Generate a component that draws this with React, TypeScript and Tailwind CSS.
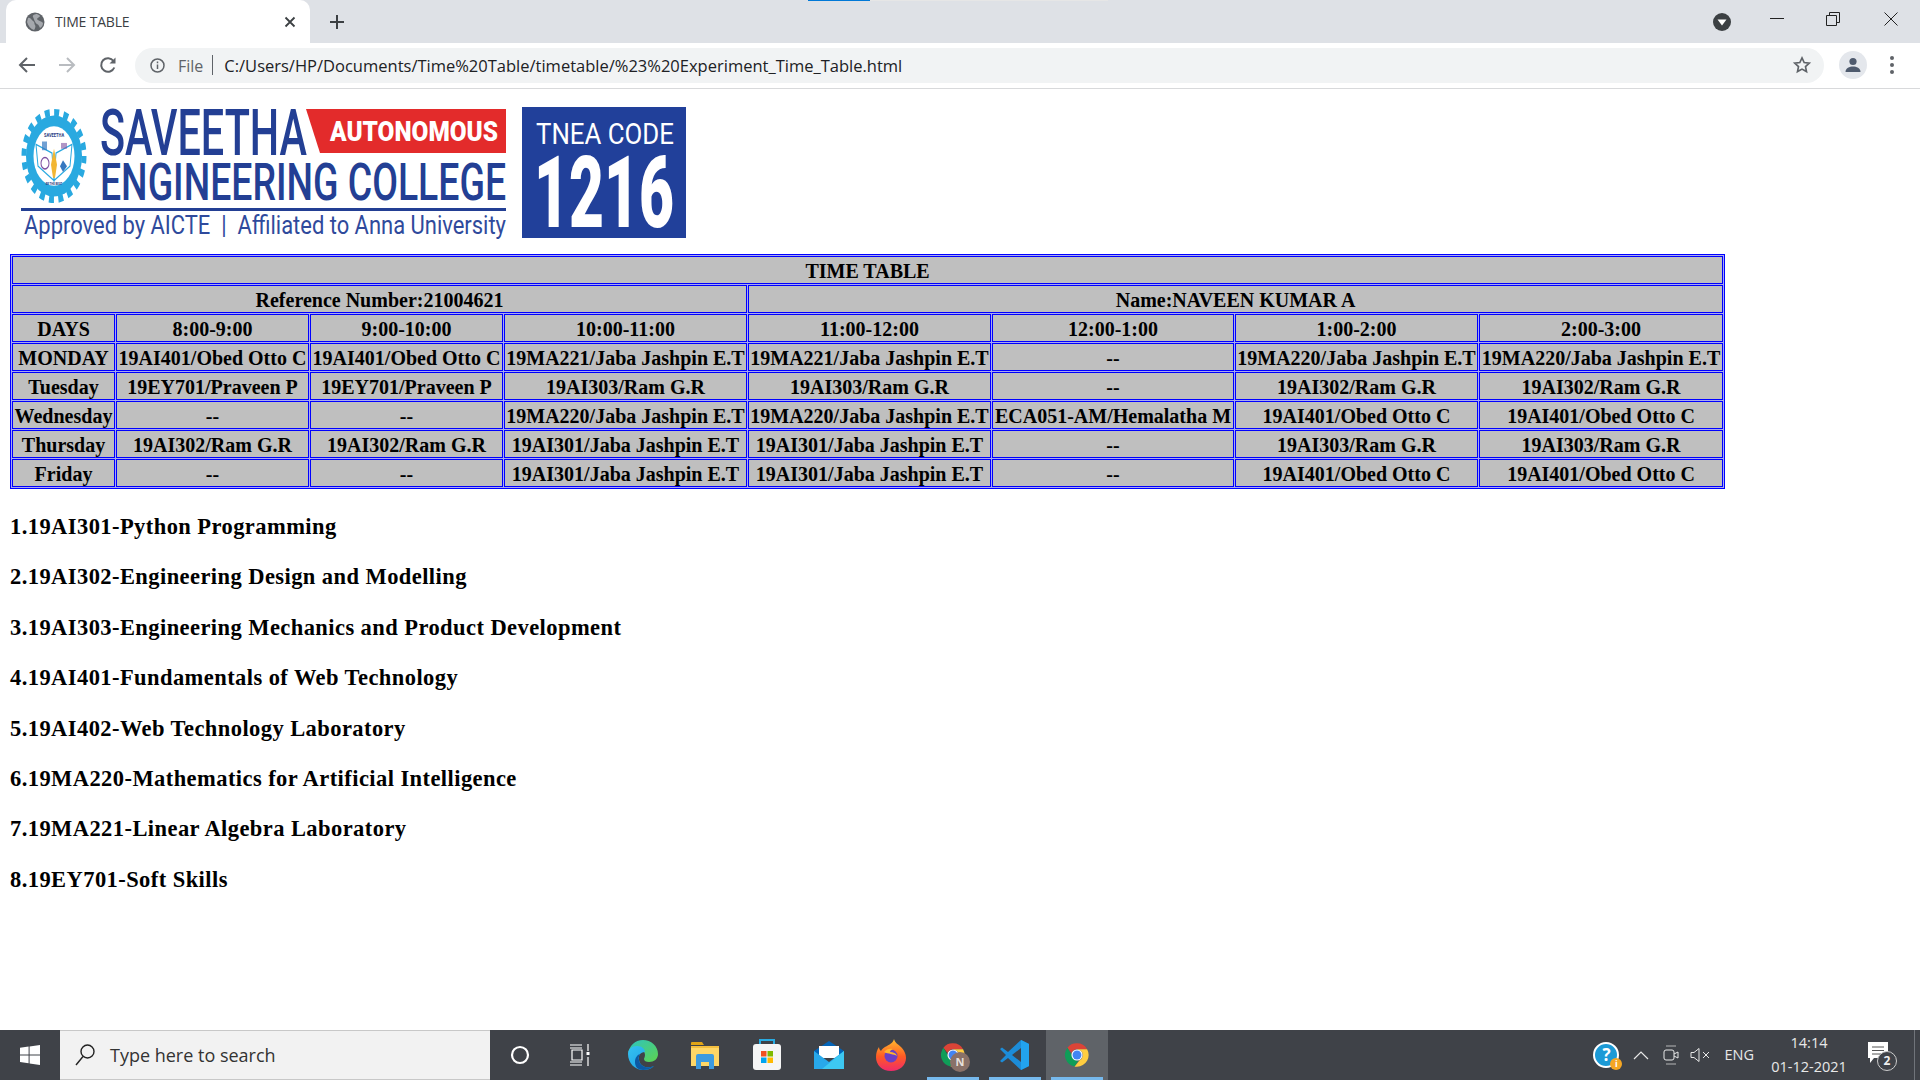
import React from "react";

const serif = "font-['Liberation_Serif',serif]";
const ui = "font-['Open_Sans',sans-serif]";

const widths = [103, 193, 193, 243, 243, 242, 243, 244];
const rows: string[][] = [
  ["DAYS", "8:00-9:00", "9:00-10:00", "10:00-11:00", "11:00-12:00", "12:00-1:00", "1:00-2:00", "2:00-3:00"],
  ["MONDAY", "19AI401/Obed Otto C", "19AI401/Obed Otto C", "19MA221/Jaba Jashpin E.T", "19MA221/Jaba Jashpin E.T", "--", "19MA220/Jaba Jashpin E.T", "19MA220/Jaba Jashpin E.T"],
  ["Tuesday", "19EY701/Praveen P", "19EY701/Praveen P", "19AI303/Ram G.R", "19AI303/Ram G.R", "--", "19AI302/Ram G.R", "19AI302/Ram G.R"],
  ["Wednesday", "--", "--", "19MA220/Jaba Jashpin E.T", "19MA220/Jaba Jashpin E.T", "ECA051-AM/Hemalatha M", "19AI401/Obed Otto C", "19AI401/Obed Otto C"],
  ["Thursday", "19AI302/Ram G.R", "19AI302/Ram G.R", "19AI301/Jaba Jashpin E.T", "19AI301/Jaba Jashpin E.T", "--", "19AI303/Ram G.R", "19AI303/Ram G.R"],
  ["Friday", "--", "--", "19AI301/Jaba Jashpin E.T", "19AI301/Jaba Jashpin E.T", "--", "19AI401/Obed Otto C", "19AI401/Obed Otto C"],
];
const subjects = [
  "1.19AI301-Python Programming",
  "2.19AI302-Engineering Design and Modelling",
  "3.19AI303-Engineering Mechanics and Product Development",
  "4.19AI401-Fundamentals of Web Technology",
  "5.19AI402-Web Technology Laboratory",
  "6.19MA220-Mathematics for Artificial Intelligence",
  "7.19MA221-Linear Algebra Laboratory",
  "8.19EY701-Soft Skills",
];

const cell = "h-[28px] border border-[#0000ff] bg-[#bfbfbf] p-0 pt-[1px] text-center align-middle whitespace-nowrap overflow-hidden font-bold";

function Logo() {
  const blue = "#233f94";
  const f = "Roboto, sans-serif";
  return (
    <svg className="block" width="680" height="145" viewBox="10 100 680 145">
      <g transform="translate(54 156) scale(1 1.45)">
        <circle r="28" fill="#29a9e0" />
        <circle r="30" fill="none" stroke="#29a9e0" strokeWidth="5" strokeDasharray="5 4.42" />
        <circle r="20.5" fill="#fff" />
        <path d="M-18 -8 L-2 -2 L0 17 L-16 7Z M18 -8 L2 -2 L0 17 L16 7Z" fill="#fff" stroke="#29a9e0" strokeWidth="1" />
        <path d="M0 -5 L3 6 L1 15 L-1 15 L-3 6Z" fill="#f2b632" />
        <circle cx="-9" cy="5" r="4" fill="none" stroke="#7b4fa0" strokeWidth="1" />
        <path d="M9 3 l4 4 l-4 4 l-3 -4Z" fill="#3578c0" />
        <path d="M-12 -10 h5 v6 h-5Z" fill="#3578c0" opacity=".7" />
        <path d="M7 -9 h6 v4 h-6Z" fill="#7b4fa0" opacity=".6" />
        <text x="0" y="-13" textAnchor="middle" fontFamily={f} fontSize="4" fontWeight="700" fill="#29397f">SAVEETHA</text>
        <text x="0" y="20" textAnchor="middle" fontFamily={f} fontSize="2.8" fontWeight="700" fill="#29397f">BE THE BEST</text>
      </g>
      <text x="100" y="155" fontFamily={f} fontSize="64" fontWeight="500" fill={blue} textLength="207" lengthAdjust="spacingAndGlyphs">SAVEETHA</text>
      <path d="M306 109 H506 V153 H320Z" fill="#e32b2b" />
      <text x="330" y="141" fontFamily={f} fontSize="28" fontWeight="900" fill="#fff" textLength="168" lengthAdjust="spacingAndGlyphs">AUTONOMOUS</text>
      <text x="100" y="200" fontFamily={f} fontSize="52" fontWeight="500" fill={blue} textLength="406" lengthAdjust="spacingAndGlyphs">ENGINEERING COLLEGE</text>
      <rect x="21" y="208" width="485" height="3" fill={blue} />
      <text x="24" y="234" fontFamily={f} fontSize="25" fill="#2f4a9c" textLength="482" lengthAdjust="spacingAndGlyphs">{"Approved by AICTE \u00a0|\u00a0 Affiliated to Anna University"}</text>
      <rect x="522" y="107" width="164" height="131" fill="#21409a" />
      <text x="536" y="144" fontFamily={f} fontSize="30" fill="#fff" textLength="138" lengthAdjust="spacingAndGlyphs">TNEA CODE</text>
      <text x="534" y="227" fontFamily={f} fontSize="100" fontWeight="900" fill="#fff" textLength="140" lengthAdjust="spacingAndGlyphs">1216</text>
    </svg>
  );
}

function ChromeLogo({ size = 26 }: { size?: number }) {
  return (
    <svg width={size} height={size} viewBox="0 0 48 48">
      <path d="M24 4a20 20 0 0 1 17.3 10H24a10 10 0 0 0-9.4 6.6L7.6 11.5A20 20 0 0 1 24 4Z" fill="#db4437" />
      <path d="M7.6 11.5l8.7 15A10 10 0 0 0 26 34l-6.3 9.6A20 20 0 0 1 7.6 11.5Z" fill="#0f9d58" />
      <path d="M41.3 14A20 20 0 0 1 24 44h-4.3L28.5 33A10 10 0 0 0 31 17l-7-3Z" fill="#ffcd40" />
      <circle cx="24" cy="24" r="9.5" fill="#fff" />
      <circle cx="24" cy="24" r="7.6" fill="#4285f4" />
    </svg>
  );
}

function TabBar() {
  return (
    <div className="relative flex h-[43px] items-end bg-[#dee1e6]">
      <div className="absolute left-[808px] top-0 h-px w-[62px] bg-[#0078d7]" />
      <div className="absolute left-[870px] top-0 h-px w-[238px] bg-[#e6e6e6]" />
      <div className="ml-[6px] flex h-[43px] w-[304px] items-center rounded-t-[10px] bg-white pl-[19px]">
        <svg width="20" height="20" viewBox="0 0 20 20" className="shrink-0">
          <circle cx="10" cy="10" r="9.5" fill="#5f6368" />
          <path d="M3 6c3-1 3 2 5 3s1 3 2 4 0 4-1 5c-3-1-6-4-7-8zM12 2c1 1 3 1 3 2s-3 2-3 3 3 2 5 3l1 1c0 2-1 4-3 5-1-2-1-3-3-4S9 7 8 5s2-3 4-3Z" fill="#dee1e6" opacity=".55" />
        </svg>
        <span className={`${ui} ml-[10px] w-[224px] text-[14px] tracking-[-0.2px] whitespace-nowrap text-[#3c4043]`}>TIME TABLE</span>
        <svg width="12" height="12" viewBox="0 0 12 12" className="ml-[5px]" stroke="#3c4043" strokeWidth="1.8">
          <path d="M1.5 1.5l9 9M10.5 1.5l-9 9" />
        </svg>
      </div>
      <svg width="16" height="16" viewBox="0 0 16 16" className="mb-[13px] ml-[19px]" stroke="#3c4043" strokeWidth="2">
        <path d="M8 1v14M1 8h14" />
      </svg>
      <div className="ml-auto flex h-full items-center pr-[22px]">
        <svg width="18" height="18" viewBox="0 0 18 18" className="mr-[39px] mt-[1px]">
          <circle cx="9" cy="9" r="9" fill="#3c4043" />
          <path d="M4.5 6.5h9L9 12.5Z" fill="#fff" />
        </svg>
        <svg width="14" height="14" viewBox="0 0 14 14" className="mr-[42px] mb-[7px]" stroke="#222" strokeWidth="1">
          <path d="M0 7.5h14" />
        </svg>
        <svg width="14" height="14" viewBox="0 0 14 14" className="mr-[44px] mb-[5px]" fill="none" stroke="#222" strokeWidth="1">
          <path d="M.5 3.5h10v10H.5zM3.5 3.5V.5h10v10h-3" />
        </svg>
        <svg width="14" height="14" viewBox="0 0 14 14" className="mb-[5px]" stroke="#222" strokeWidth="1">
          <path d="M.5.5l13 13M13.5.5l-13 13" />
        </svg>
      </div>
    </div>
  );
}

function Toolbar() {
  return (
    <div className="flex h-[46px] items-center border-b border-[#d8d9db] bg-white pb-[1px]">
      <svg width="18" height="18" viewBox="0 0 18 18" className="ml-[18px]" fill="none" stroke="#5f6368" strokeWidth="2">
        <path d="M17 9H2M9 2L2 9l7 7" />
      </svg>
      <svg width="18" height="18" viewBox="0 0 18 18" className="ml-[22px]" fill="none" stroke="#b9bcc0" strokeWidth="2">
        <path d="M1 9h15M9 2l7 7-7 7" />
      </svg>
      <svg width="18" height="18" viewBox="0 0 18 18" className="ml-[23px]" fill="none" stroke="#5f6368" strokeWidth="2">
        <path d="M15.3 11.5A6.8 6.8 0 1 1 14.5 5" />
        <path d="M16.5 1.5v6h-6z" fill="#5f6368" stroke="none" />
      </svg>
      <div className="ml-[18px] flex h-[35px] w-[1689px] items-center rounded-full bg-[#f1f3f4] pl-[15px]">
        <svg width="15" height="15" viewBox="0 0 15 15" className="shrink-0" fill="none" stroke="#5f6368" strokeWidth="1.5">
          <circle cx="7.5" cy="7.5" r="6.5" />
          <path d="M7.5 6.5V11M7.5 3.6v1.6" />
        </svg>
        <span className={`${ui} ml-[13px] mt-[1px] text-[16px] text-[#5f6368]`}>File</span>
        <span className="ml-[9px] h-[20px] w-px bg-[#5f6368]" />
        <span className={`${ui} ml-[11px] mt-[2px] text-[16.500px] whitespace-nowrap text-[#202124]`}>C:/Users/HP/Documents/Time%20Table/timetable/%23%20Experiment_Time_Table.html</span>
        <svg width="20" height="20" viewBox="0 0 24 24" className="ml-auto mr-[12px]" fill="none" stroke="#5f6368" strokeWidth="2">
          <path d="M12 3.5l2.6 5.6 6.1.7-4.5 4.1 1.2 6-5.4-3-5.4 3 1.2-6-4.5-4.1 6.1-.7z" />
        </svg>
      </div>
      <div className="ml-[15px] flex h-[28px] w-[28px] items-center justify-center rounded-full bg-[#e4e7ec]">
        <svg width="18" height="18" viewBox="0 0 18 18" fill="#4f5b6e">
          <circle cx="9" cy="5.5" r="3.6" />
          <path d="M1.5 16c0-4 4-5.5 7.500-5.500s7.500 1.500 7.500 5.500z" />
        </svg>
      </div>
      <div className="ml-[23px] flex flex-col gap-[3px]">
        <span className="h-[4px] w-[4px] rounded-full bg-[#5f6368]" />
        <span className="h-[4px] w-[4px] rounded-full bg-[#5f6368]" />
        <span className="h-[4px] w-[4px] rounded-full bg-[#5f6368]" />
      </div>
    </div>
  );
}

function TimeTable() {
  return (
    <table className={`${serif} w-[1715px] table-fixed border-separate border-spacing-[1px] border border-[#0000ff] bg-[#aaaaee] text-[20px] leading-none text-black`}>
      <colgroup>
        {widths.map((w, i) => (
          <col key={i} style={{ width: w }} />
        ))}
      </colgroup>
      <tbody>
        <tr>
          <td colSpan={8} className={cell}>TIME TABLE</td>
        </tr>
        <tr>
          <td colSpan={4} className={cell}>Reference Number:21004621</td>
          <td colSpan={4} className={cell}>Name:NAVEEN KUMAR A</td>
        </tr>
        {rows.map((r, i) => (
          <tr key={i}>
            {r.map((c, j) => (
              <td key={j} className={cell}>{c}</td>
            ))}
          </tr>
        ))}
      </tbody>
    </table>
  );
}

function TaskIcon({ children, active, lit }: { children: React.ReactNode; active?: boolean; lit?: boolean }) {
  return (
    <div className={`relative flex h-full w-[62px] items-center justify-center ${lit ? "bg-[#5f6368]" : ""}`}>
      {children}
      {active && <span className="absolute bottom-0 left-[5px] right-[5px] h-[3px] bg-[#76b9ed]" />}
    </div>
  );
}

function Taskbar() {
  return (
    <div className="flex h-[50px] items-stretch bg-[#3f4248]">
      <div className="flex w-[60px] items-center justify-center">
        <svg width="20" height="20" viewBox="0 0 20 20" fill="#fff">
          <path d="M0 2.800l8.600-1.200v7.800H0zM9.600 1.400L20 0v9.400H9.600zM0 10.400h8.600v7.900L0 17.100zM9.600 10.400H20V20L9.600 18.500z" />
        </svg>
      </div>
      <div className="flex w-[430px] items-center border-y border-[#c8c8c8] bg-[#f2f2f2] pl-[15px]">
        <svg width="20" height="22" viewBox="0 0 20 22" fill="none" stroke="#222" strokeWidth="1.4">
          <circle cx="12.500" cy="7.500" r="6.500" />
          <path d="M8 12.500L1 21" />
        </svg>
        <span className={`${ui} ml-[15px] text-[18px] text-[#333]`}>Type here to search</span>
      </div>
      <div className="flex w-[60px] items-center justify-center">
        <svg width="20" height="20" viewBox="0 0 20 20" fill="none" stroke="#fff" strokeWidth="2.200"><circle cx="10" cy="10" r="8" /></svg>
      </div>
      <div className="flex w-[60px] items-center justify-center">
        <svg width="22" height="24" viewBox="0 0 22 24" fill="none" stroke="#fff" strokeWidth="1.200">
          <path d="M1 2h12M1 22h12M3 7h10v10H3zM19 1v7M19 14v9M1 5h12M1 19h12" />
          <rect x="17.500" y="9" width="3" height="3" fill="#fff" stroke="none" />
        </svg>
      </div>
      <div className="ml-[2px] flex items-stretch">
        <TaskIcon>
          <svg width="32" height="32" viewBox="0 0 32 32">
            <defs>
              <linearGradient id="e1" x1="0" y1="0" x2="1" y2="1"><stop offset="0" stopColor="#35c1f1" /><stop offset="1" stopColor="#1b9de2" /></linearGradient>
              <linearGradient id="e2" x1="0" y1="0" x2="1" y2="1"><stop offset="0" stopColor="#2dc3c1" /><stop offset="1" stopColor="#5ed44d" /></linearGradient>
            </defs>
            <path d="M16 1C24 1 31 7 31 15c0 5-4 8-9 8-3 0-5-1-5-3 0-1 1-2 1-4 0-4-4-7-8-7-4 0-8 2-9 6C2 7 8 1 16 1Z" fill="url(#e2)" />
            <path d="M1 15c0 9 7 16 15 16 4 0 8-1 11-4-6 3-14 1-15-6-1-4 1-8 6-8 0-3-3-6-8-6-5 0-9 3-9 8Z" fill="url(#e1)" />
            <path d="M12 21c1 7 9 9 15 6-4 3-7 4-11 4-5 0-8-3-8-8 0-4 2-7 5-8-1 2-2 4-1 6Z" fill="#0c59a4" />
          </svg>
        </TaskIcon>
        <TaskIcon>
          <svg width="30" height="28" viewBox="0 0 30 28">
            <path d="M1 2a1 1 0 0 1 1-1h10l2 3h-13z" fill="#e0a416" />
            <path d="M1 5h28v20H1z" fill="#ffd767" />
            <path d="M1 5h28v2H1z" fill="#f4bf3f" />
            <path d="M6 15a2 2 0 0 1 2-2h14a2 2 0 0 1 2 2v13h-5v-7h-8v7H6z" fill="#3d9be0" />
          </svg>
        </TaskIcon>
        <TaskIcon>
          <svg width="30" height="32" viewBox="0 0 30 32">
            <rect x="1" y="5" width="28" height="26" rx="3" fill="#f5f5f5" />
            <path d="M8 5V1h14v4" fill="none" stroke="#29abe2" strokeWidth="2" />
            <rect x="9" y="12" width="5.500" height="5.500" fill="#f25022" />
            <rect x="15.500" y="12" width="5.500" height="5.500" fill="#7fba00" />
            <rect x="9" y="18.500" width="5.500" height="5.500" fill="#00a4ef" />
            <rect x="15.500" y="18.500" width="5.500" height="5.500" fill="#ffb900" />
          </svg>
        </TaskIcon>
        <TaskIcon>
          <svg width="30" height="28" viewBox="0 0 30 28">
            <path d="M0 10L15 0l15 10v4H0z" fill="#0364b8" />
            <path d="M5 5h20v12H5z" fill="#fff" />
            <path d="M0 10l15 11 15-11v18H0z" fill="#28a8ea" />
            <path d="M30 10v18H8z" fill="#3dc8f2" />
          </svg>
        </TaskIcon>
        <TaskIcon>
          <svg width="30" height="32" viewBox="0 0 30 32">
            <defs>
              <linearGradient id="ff" x1="0" y1="0" x2="0" y2="1"><stop offset="0" stopColor="#ffbd2e" /><stop offset=".55" stopColor="#ff5a24" /><stop offset="1" stopColor="#f02a6b" /></linearGradient>
            </defs>
            <path d="M18 0c1 4 4 5 7 8 4 4 5 8 5 11 0 7-6 13-15 13S0 26 0 18c0-4 1-7 3-10 0 2 1 3 2 4 1-2 3-4 6-5 3-2 6-3 7-7Z" fill="url(#ff)" />
            <circle cx="15" cy="17" r="6.500" fill="#6b3fc4" />
            <path d="M8 13c2-3 6-4 9-3-2 1-3 2-3 3 3 0 6 1 7 4-3-2-9-2-13-4Z" fill="#ffb52e" />
          </svg>
        </TaskIcon>
        <TaskIcon active>
          <div className="relative">
            <ChromeLogo size={28} />
            <span className="absolute left-[11px] top-[11px] flex h-[20px] w-[20px] items-center justify-center rounded-full bg-[#8a7168] font-['Open_Sans',sans-serif] text-[11px] font-bold text-[#e8e0dc]">N</span>
          </div>
        </TaskIcon>
        <TaskIcon active>
          <svg width="30" height="32" viewBox="0 0 30 32">
            <path d="M21 1l8 4v22l-8 4-13-12-6 4.500L0 22l6-6-6-6 2-1.500 6 4.500z" fill="#1c8cd8" />
            <path d="M21 1l8 4v22l-8 4z" fill="#22a3ee" />
            <path d="M21 9l-9 7 9 7z" fill="#3f4248" />
          </svg>
        </TaskIcon>
        <TaskIcon active lit>
          <ChromeLogo size={28} />
        </TaskIcon>
      </div>
      <div className="relative ml-auto flex items-center">
        <div className="relative mr-[14px] flex h-[26px] w-[26px] items-center justify-center rounded-full border-2 border-white bg-[#1c9ad6] font-['Open_Sans',sans-serif] text-[17px] font-bold text-white">
          ?
          <span className="absolute right-[-5px] bottom-[-4px] flex h-[12px] w-[12px] items-center justify-center rounded-full bg-[#f5a623] text-[9px] text-white">i</span>
        </div>
        <svg width="16" height="10" viewBox="0 0 16 10" fill="none" stroke="#e8e8e8" strokeWidth="1.200" className="mr-[14px]"><path d="M1 9l7-7 7 7" /></svg>
        <svg width="16" height="20" viewBox="0 0 16 20" fill="none" stroke="#e8e8e8" strokeWidth="1" className="mr-[11px]">
          <path d="M3 1h10M3 19h10" opacity=".7" />
          <rect x="1" y="5" width="10" height="10" rx="2" />
          <path d="M11 9l4-2v6l-4-2" />
        </svg>
        <svg width="20" height="16" viewBox="0 0 20 16" fill="none" stroke="#e8e8e8" strokeWidth="1" className="mr-[14px]">
          <path d="M1 5.500h3l5-4v13l-5-4H1zM13 5l6 6M19 5l-6 6" />
        </svg>
        <span className={`${ui} mr-[15px] text-[14.500px] text-[#e8e8e8]`}>ENG</span>
        <div className={`${ui} mr-[19px] flex w-[80px] flex-col items-center text-[14.500px] leading-[24px] text-[#e8e8e8]`}>
          <span>14:14</span>
          <span className="whitespace-nowrap">01-12-2021</span>
        </div>
        <div className="relative mr-[30px] h-[26px] w-[22px]">
          <svg width="22" height="22" viewBox="0 0 22 22" className="absolute top-0">
            <path d="M0 0h20v16H6l-4 5v-5H0z" fill="#fff" />
            <path d="M4 5h12M4 8.500h12M4 12h9" stroke="#555" strokeWidth="1" />
          </svg>
          <span className={`${ui} absolute left-[9px] top-[9px] flex h-[20px] w-[20px] items-center justify-center rounded-full border border-[#cccccc] bg-[#3f4248] text-[12px] font-bold text-[#eeeeee]`}>2</span>
        </div>
        <span className="absolute bottom-0 right-[5px] top-0 w-px bg-[#70747a]" />
      </div>
    </div>
  );
}

export default function App() {
  return (
    <div className="flex h-screen flex-col overflow-hidden bg-white">
      <TabBar />
      <Toolbar />
      <main className={`${serif} flex-1 pl-[10px] pt-[11px]`}>
        <Logo />
        <div className="mt-[9px]">
          <TimeTable />
        </div>
        <div className="mt-[25px]">
          {subjects.map((s) => (
            <h3 key={s} className="mb-[25.4px] h-[25px] text-[22.500px] leading-[25px] font-bold tracking-[0.43px] text-black">{s}</h3>
          ))}
        </div>
      </main>
      <Taskbar />
    </div>
  );
}
